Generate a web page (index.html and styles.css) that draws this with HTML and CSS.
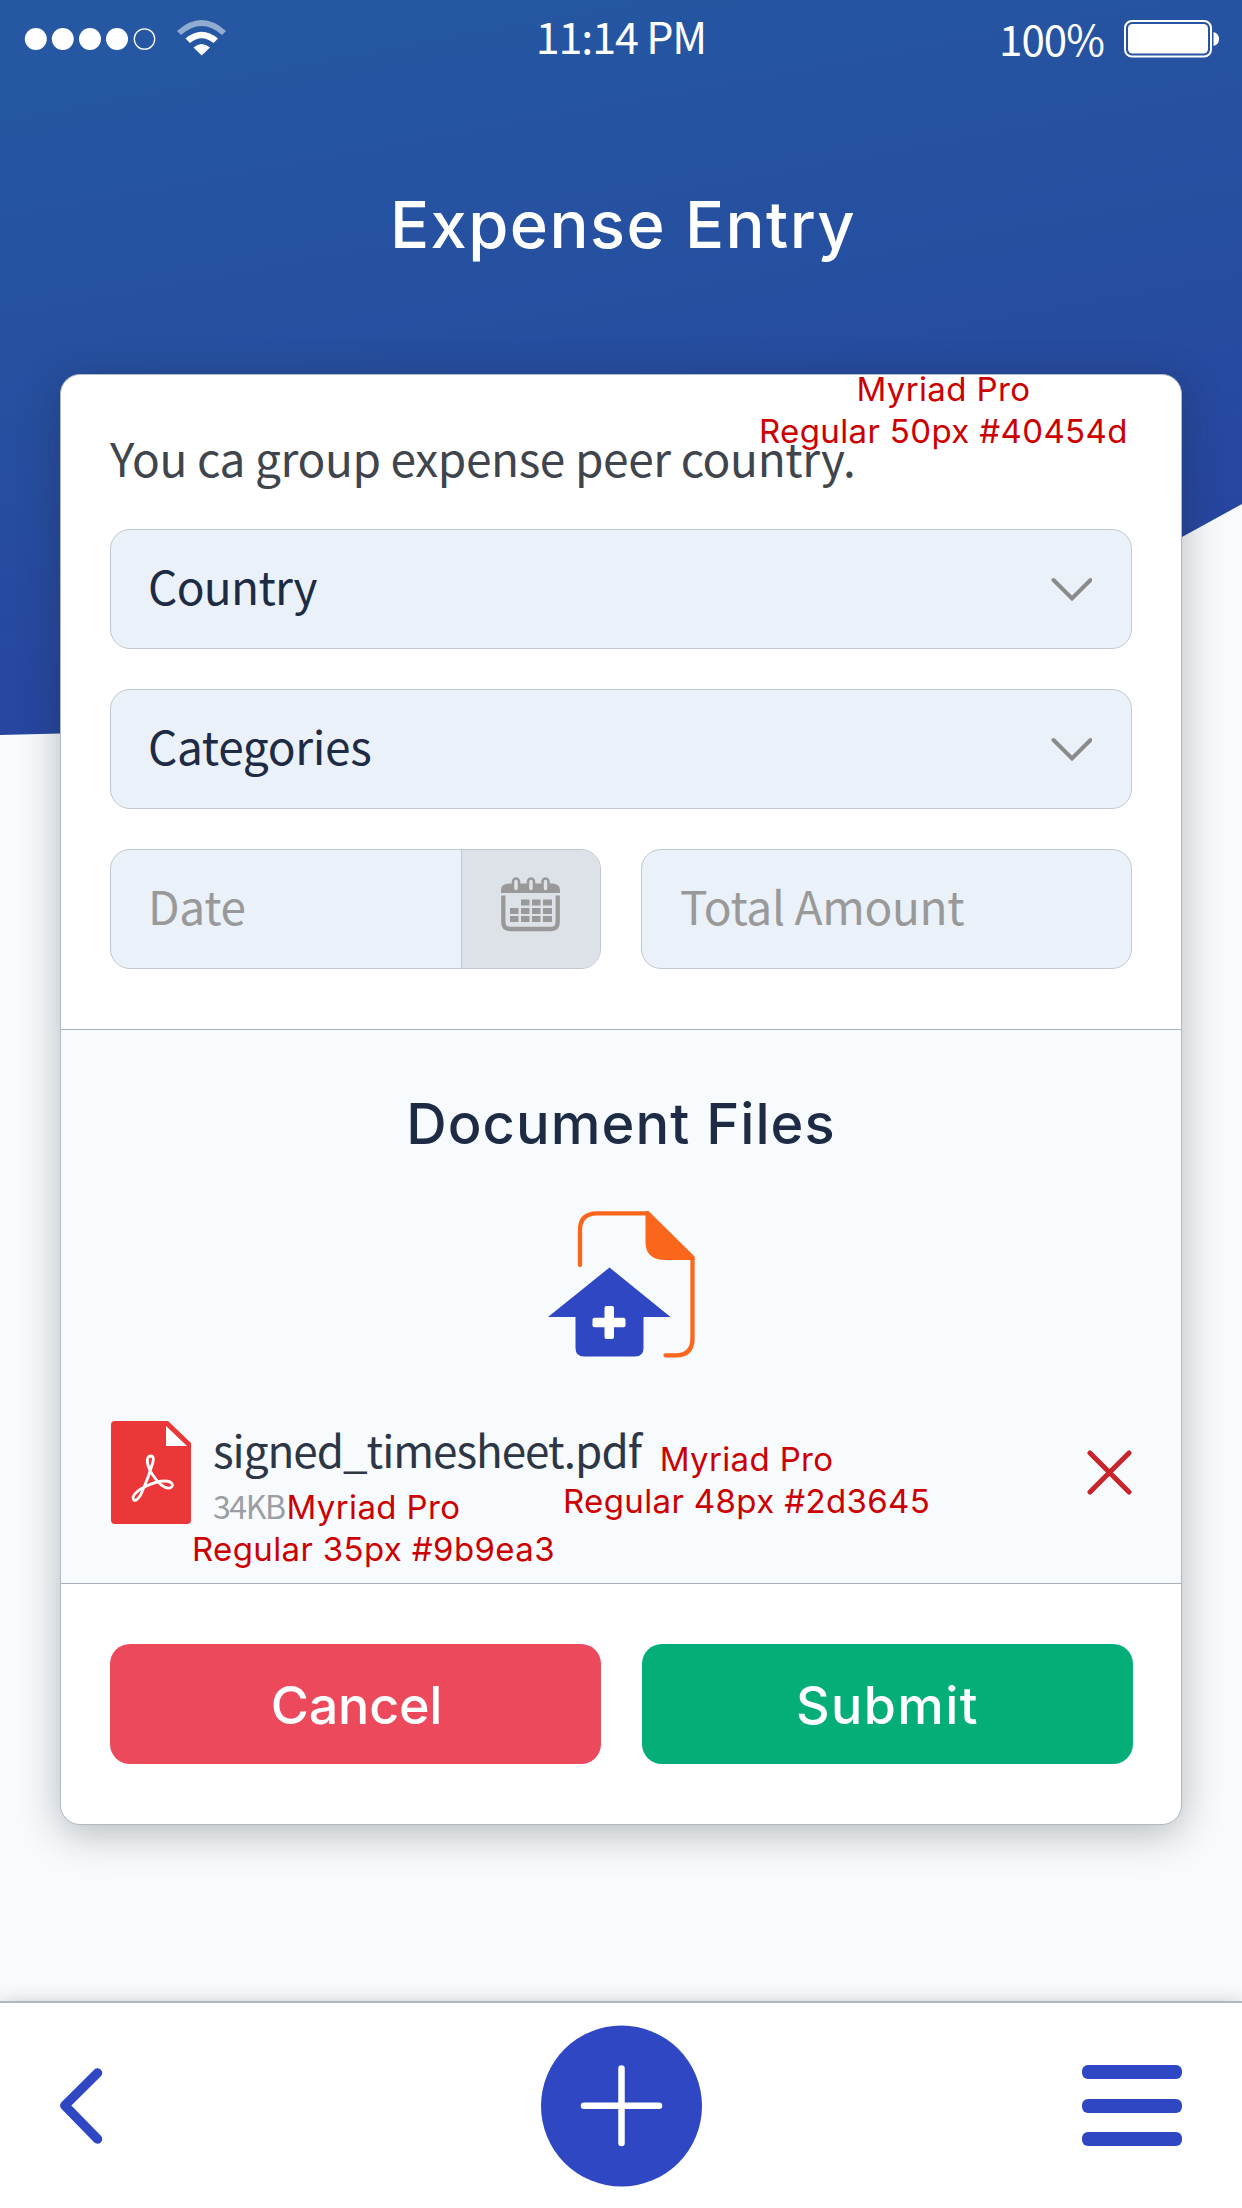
FILE: index.html
```html
<!DOCTYPE html>
<html lang="en">
<head>
<meta charset="utf-8">
<title>Expense Entry</title>
<link rel="stylesheet" href="styles.css">
</head>
<body>
<div class="screen">
  <svg class="backdrop" viewBox="0 0 1242 736" aria-hidden="true">
    <defs><linearGradient id="sky" gradientUnits="userSpaceOnUse" x1="400" y1="0" x2="540" y2="760"><stop offset="0" stop-color="#2557a2"/><stop offset=".5" stop-color="#264ea0"/><stop offset="1" stop-color="#27429f"/></linearGradient></defs>
    <path d="M0 0H1242V504L1182 537Q840 726 60 733.500L0 735Z" fill="url(#sky)"/>
  </svg>

  <header class="status">
    <div class="signal">
      <svg width="230" height="60" viewBox="0 0 230 60">
        <g fill="#fff"><circle cx="35.800" cy="39" r="11"/><circle cx="62.800" cy="39" r="11"/><circle cx="90" cy="39" r="11"/><circle cx="117" cy="39" r="11"/></g>
        <circle cx="144.500" cy="39" r="10.200" fill="none" stroke="#fff" stroke-width="1.300"/>
        <path d="M177 31Q201.500 9 226 31L222 35Q201.500 17 181 35Z" fill="#fff" opacity=".5"/>
        <path d="M185.500 38.500Q201.500 25 218 38.500L213.500 43Q201.500 33.500 190 43Z" fill="#fff"/>
        <path d="M193.500 47.500Q201.500 40.500 210 47.500L201.700 55.500Z" fill="#fff"/>
      </svg>
    </div>
    <div class="clock">11:14 PM</div>
    <div class="battery">
      <span class="percent">100%</span>
      <svg width="96" height="40" viewBox="0 0 96 40">
        <rect x="1" y="3" width="86" height="35.500" rx="7" fill="none" stroke="#fff" stroke-width="2"/>
        <rect x="4" y="6" width="80" height="29.500" rx="4.500" fill="#fff"/>
        <path d="M89.500 14Q95 15.500 95 21T89.500 28Z" fill="#fff"/>
      </svg>
    </div>
  </header>

  <h1 class="title">Expense Entry</h1>

  <main class="card">
    <section class="form">
      <p class="hint">You ca group expense peer country.</p>
      <div class="field select"><span class="t-country">Country</span>
        <svg width="42" height="26" viewBox="0 0 42 26"><path d="M3.500 4L22 22.500L40.500 4" class="chevron"/></svg></div>
      <div class="field select"><span class="t-categories">Categories</span>
        <svg width="42" height="26" viewBox="0 0 42 26"><path d="M3.500 4L22 22.500L40.500 4" class="chevron"/></svg></div>
      <div class="pair">
        <div class="field date"><span class="t-date">Date</span>
          <div class="picker">
            <svg width="60" height="55" viewBox="0 0 60 55">
              <path d="M0 16V13Q0 6.500 8 6.500H51Q59 6.500 59 13V16Z" fill="#999"/>
              <g fill="#dfe3e8" stroke="#999" stroke-width="2.500"><rect x="12" y="1.500" width="6" height="13" rx="3"/><rect x="27" y="1.500" width="6" height="13" rx="3"/><rect x="41.500" y="1.500" width="6" height="13" rx="3"/></g>
              <path d="M2.300 18.500V45Q2.300 52 9 52H50Q56.700 52 56.700 45V18.500" fill="none" stroke="#999" stroke-width="4.300"/>
              <g fill="#999"><path d="M20 22.500h8.500v6H20zM31 22.500h8.500v6H31zM42 22.500h9v6h-9zM9 31h8.500v6H9zM20 31h8.500v6H20zM31 31h8.500v6H31zM42 31h9v6h-9zM9 39h8.500v6H9zM20 39h8.500v6H20zM31 39h8.500v6H31zM42 39h9v6h-9z"/></g>
            </svg>
          </div>
        </div>
        <div class="field total"><span class="t-total">Total Amount</span></div>
      </div>
    </section>

    <section class="documents">
      <h2 class="subtitle">Document Files</h2>
      <svg class="upload" width="148" height="148" viewBox="0 0 148 148">
        <g fill="none" stroke="#fa671c" stroke-width="4.300" stroke-linecap="round"><path d="M32 54V19Q32 2.300 49 2.300H99"/><path d="M144.500 48V127Q144.500 144.300 128 144.300H117.500"/></g>
        <path d="M97.500 0H100.500L146.600 45.500V49H115.500Q97.500 48 97.500 31Z" fill="#fa671c"/>
        <path d="M61.500 56.500L122.500 106H95.500V137Q95.500 145.500 87 145.500H36Q27.500 145.500 27.500 137V106H0Z" fill="#2f47c3"/>
        <g fill="#fff"><rect x="56.500" y="95" width="9.500" height="33" rx="2"/><rect x="44.500" y="106.700" width="33" height="9.500" rx="2"/></g>
      </svg>
      <div class="file">
        <svg width="80" height="103" viewBox="0 0 80 103">
          <path d="M4 0H57L80 22V99Q80 103 76 103H4Q0 103 0 99V4Q0 0 4 0Z" fill="#eb3737"/><path d="M55 5L76 25H55Z" fill="#fff"/>
          <path d="M40 35C34 35 36 45 41 53C47 62 54 68 59 67C64 65 61 60 54 60C44 60 25 68 22 76C22 82 27 80 31 71C36 60 40 48 42 41C43 37 42 35 40 35Z" fill="none" stroke="#fff" stroke-width="2.800" stroke-linejoin="round"/>
        </svg>
        <div class="meta"><div class="name">signed_timesheet.pdf</div><div class="size">34KB</div></div>
        <svg class="remove" width="46" height="46" viewBox="0 0 46 46"><path d="M3 3L42 42M42 3L3 42" fill="none" stroke="#c8252b" stroke-width="5" stroke-linecap="round"/></svg>
      </div>
    </section>

    <section class="actions">
      <button class="btn cancel">Cancel</button>
      <button class="btn submit">Submit</button>
    </section>

    <div class="note note-hint"><span>Myriad Pro</span><span>Regular 50px #40454d</span></div>
    <div class="note note-name"><span>Myriad Pro</span><span>Regular 48px #2d3645</span></div>
    <div class="note note-size"><span>Myriad Pro</span><span>Regular 35px #9b9ea3</span></div>
  </main>

  <nav class="tabs">
    <svg width="44" height="76" viewBox="0 0 44 76"><path d="M37.500 5L4.800 37.500L37.500 71" fill="none" stroke="#2f47c3" stroke-width="9.500" stroke-linecap="round" stroke-linejoin="round"/></svg>
    <svg width="162" height="162" viewBox="0 0 162 162"><circle cx="81.500" cy="81" r="80.500" fill="#2f47c3"/><path d="M81.500 43.500V118M44 80.800H119" stroke="#fff" stroke-width="6.500" stroke-linecap="round"/></svg>
    <svg class="menu" width="100" height="82" viewBox="0 0 100 82" fill="#2f47c3"><rect width="100" height="14" rx="6"/><rect y="34" width="100" height="14" rx="6"/><rect y="67" width="100" height="14" rx="6"/></svg>
  </nav>
</div>
</body>
</html>
```
FILE: styles.css
```css
* { box-sizing: border-box; }
body { margin: 0; background: #f7fbfe; }
h1, h2, p { margin: 0; font-weight: 500; }
svg { display: block; flex: none; }

.screen {
  position: relative;
  width: 1242px;
  height: 2208px;
  display: flex;
  flex-direction: column;
  overflow: hidden;
  background: #f7fbfe;
  font-family: "Noto Sans CJK SC", "Noto Sans", sans-serif;
  font-size: 46px;
  line-height: 60px;
  white-space: nowrap;
}
.backdrop { position: absolute; top: 0; left: 0; width: 1242px; height: 736px; }

.status, .title { position: relative; color: #fff; }
.status {
  height: 80px;
  display: grid;
  grid-template-columns: 1fr auto 1fr;
  align-items: start;
}
.clock { font-size: 43px; padding-top: 5px; letter-spacing: -1.1px; }
.battery { display: flex; justify-content: flex-end; align-items: flex-start; gap: 20px; padding: 18px 22px 0 0; }
.percent { font-size: 42px; margin-top: -10px; letter-spacing: -.9px; }

.title {
  height: 294px;
  padding: 105px 0 0 4px;
  text-align: center;
  font: 500 65px/80px Inter, sans-serif;
  letter-spacing: 1.45px;
}

.card {
  position: relative;
  width: 1122px;
  height: 1451px;
  margin-left: 60px;
  border: 1px solid #b1b9c4;
  border-radius: 20px;
  background: #fff;
  box-shadow: 0 8px 40px rgba(30, 30, 30, .3);
  display: flex;
  flex-direction: column;
}
.form {
  height: 654px;
  padding: 52px 49px 0;
  display: flex;
  flex-direction: column;
  gap: 40px;
}
.hint { height: 62px; color: #40454d; font-weight: 400; letter-spacing: -.38px; }
.field {
  height: 120px;
  border: 1px solid #bfc7d1;
  border-radius: 20px;
  background: #eaf1f9;
  color: #1e2b45;
  display: flex;
  align-items: center;
  padding-left: 37px;
}
.field span { padding-bottom: 8px; letter-spacing: -.35px; }
.field .t-country { letter-spacing: -.7px; }
.select { justify-content: space-between; padding-right: 39px; }
.total { padding-left: 38px; }
.chevron { fill: none; stroke: #8b8b8b; stroke-width: 4; stroke-linecap: round; }
.pair { display: grid; grid-template-columns: 1fr 1fr; gap: 40px; }
.pair .field { color: #999; }
.date { justify-content: space-between; overflow: hidden; }
.picker {
  width: 139px;
  height: 118px;
  border-left: 1px solid #bfc7d1;
  background: #dde2e9;
  display: flex;
  justify-content: center;
  padding-top: 27px;
}

.documents {
  height: 555px;
  border: solid #a9b2bb;
  border-width: 1px 0;
  background: #f7fbfe;
}
.subtitle {
  padding-top: 57px;
  height: 181px;
  text-align: center;
  color: #1e2b45;
  font: 500 56px/74px Inter, sans-serif;
  letter-spacing: 1.05px;
}
.upload { margin-left: 487px; }
.file { display: flex; align-items: flex-start; padding: 62px 48px 0 50px; }
.meta { margin: -2px 0 0 22px; color: #2d3645; }
.name { height: 63px; font-size: 44px; letter-spacing: -1px; }
.size { font-size: 32px; line-height: 46px; color: #9b9ea3; letter-spacing: -1.4px; }
.remove { margin: 29px 0 0 auto; }

.actions { display: grid; grid-template-columns: 1fr 1fr; gap: 41px; padding: 60px 48px 0 49px; }
.btn {
  height: 120px;
  border: 0;
  border-radius: 20px;
  padding: 3px 0 0;
  color: #fff;
  font: 500 52px/117px Inter, sans-serif;
}
.cancel { background: #ec4a5c; letter-spacing: -.2px; padding-left: 2px; }
.submit { background: #05ae79; letter-spacing: 1.5px; }

.note {
  position: absolute;
  display: flex;
  flex-direction: column;
  align-items: center;
  color: #c00;
  font: 400 33px/42px Inter, sans-serif;
  letter-spacing: .36px;
}
.note-hint { left: 698px; top: -7px; }
.note-name { left: 502px; top: 1063px; }
.note-size { left: 131px; top: 1111px; }

.tabs {
  position: relative;
  height: 207px;
  margin-top: auto;
  border-top: 2px solid #b0b8be;
  background: #fff;
  box-shadow: 0 0 16px rgba(40, 40, 40, .2);
  display: grid;
  grid-template-columns: 1fr auto 1fr;
  align-items: center;
  padding: 0 60px;
}
.menu { justify-self: end; }
```
